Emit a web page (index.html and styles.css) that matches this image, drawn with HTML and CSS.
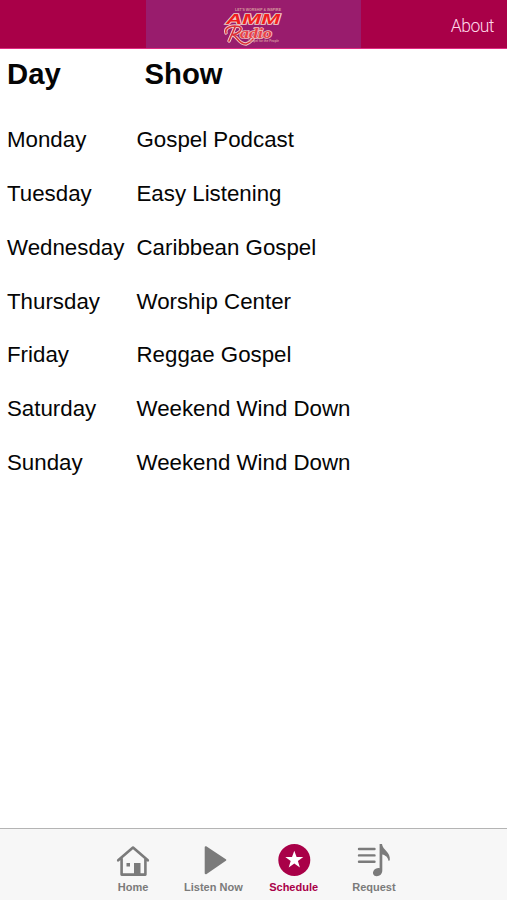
FILE: index.html
```html
<!DOCTYPE html>
<html lang="en">
<head>
<meta charset="utf-8">
<title>AMM Radio – Schedule</title>
<link rel="stylesheet" href="styles.css">
</head>
<body>
<header class="topbar">
  <div class="banner">
    <svg class="logo" width="66" height="48" viewBox="0 0 66 48" role="img" aria-label="AMM Radio">
      <text class="logo-small" x="14" y="11.3" textLength="46" lengthAdjust="spacingAndGlyphs">LET'S WORSHIP &amp; INSPIRE</text>
      <text class="logo-amm" x="5" y="23.8" textLength="54" lengthAdjust="spacingAndGlyphs">AMM</text>
      <text class="logo-script" x="19" y="37.5" textLength="32" lengthAdjust="spacingAndGlyphs">adio</text>
      <path class="logo-edge" d="M5 33C3 27 12 25 18 26.5C24 29 16 35 11 34.5C17 36 17 44 25 44C29 43 30 41 32 39M14 27L8 41"/>
      <path class="logo-r" d="M5 33C3 27 12 25 18 26.5C24 29 16 35 11 34.5C17 36 17 44 25 44C29 43 30 41 32 39M14 27L8 41"/>
      <text class="logo-small" x="27" y="41.8" textLength="31" lengthAdjust="spacingAndGlyphs">Gospel for the People</text>
    </svg>
  </div>
  <a class="about">About</a>
</header>
<main class="schedule">
  <div class="row head"><h1>Day</h1><h1>Show</h1></div>
  <div class="row"><span>Monday</span><span>Gospel Podcast</span></div>
  <div class="row"><span>Tuesday</span><span>Easy Listening</span></div>
  <div class="row"><span>Wednesday</span><span>Caribbean Gospel</span></div>
  <div class="row"><span>Thursday</span><span>Worship Center</span></div>
  <div class="row"><span>Friday</span><span>Reggae Gospel</span></div>
  <div class="row"><span>Saturday</span><span>Weekend Wind Down</span></div>
  <div class="row"><span>Sunday</span><span>Weekend Wind Down</span></div>
</main>
<nav class="tabs">
  <a class="tab">
    <svg width="36" height="36" viewBox="0 0 36 36"><path class="line" d="M3.2 18.3L18 5.6L32.8 18.3M6.6 16.5V32.6H30.4V16.5"/><path class="fill" d="M19 21h6.5v11H19zM11.5 21h3.5v3.5h-3.5z"/></svg>
    <span>Home</span>
  </a>
  <a class="tab">
    <svg width="36" height="36" viewBox="0 0 36 36"><path class="fill play" d="M10.7 5.2L30.3 18L10.7 31.3Z"/></svg>
    <span>Listen Now</span>
  </a>
  <a class="tab active">
    <svg width="36" height="36" viewBox="0 0 36 36"><circle class="fill" cx="18.3" cy="18" r="16"/><path class="star" d="M18.3 8.7L20.6 15H27.3L21.9 19L23.9 25.6L18.3 21.6L12.7 25.6L14.7 19L9.3 15H16Z"/></svg>
    <span>Schedule</span>
  </a>
  <a class="tab">
    <svg width="36" height="36" viewBox="0 0 36 36"><path class="bars" d="M3 7H18.5M3 13.4H18.5M3 19.8H18.5"/><path class="fill" d="M23.6 2H26C26.5 8 34.8 10 33.8 18.3L32.6 19C32 15 29.5 13.2 26.3 12.4V28.5C26.3 32 23.8 34.2 20.8 34.2C17.2 34.2 16.2 31.2 17.6 28.8C18.9 26.6 21.6 25.6 23.6 26.2Z"/></svg>
    <span>Request</span>
  </a>
</nav>
</body>
</html>
```

FILE: styles.css
```css
* { box-sizing: border-box; }
body {
  margin: 0;
  height: 900px;
  display: flex;
  flex-direction: column;
  background: #fff;
  color: #050505;
  font-family: "Liberation Sans", Arial, sans-serif;
  overflow: hidden;
}
.topbar {
  flex: none;
  height: 49px;
  display: grid;
  grid-template-columns: 146px 215px 1fr;
  align-items: center;
  background: #a90048;
  border-bottom: 1px solid #df2b82;
}
.banner {
  grid-column: 2;
  height: 48px;
  display: flex;
  justify-content: center;
  background: #991c6d;
}
.logo { display: block; }
.logo-small {
  font-size: 4px;
  font-weight: bold;
  fill: #d69b9f;
}
.logo-amm {
  font-size: 15.5px;
  font-weight: bold;
  font-style: italic;
  fill: #f01d20;
  stroke: #eed0c8;
  stroke-width: 1.6px;
  paint-order: stroke;
}
.logo-script {
  font-family: "Liberation Serif", serif;
  font-size: 15px;
  font-weight: bold;
  font-style: italic;
  fill: #e94046;
  stroke: #f0c5bd;
  stroke-width: 1.4px;
  paint-order: stroke;
}
.logo-edge, .logo-r { fill: none; stroke-linecap: round; }
.logo-edge { stroke: #efcfca; stroke-width: 3.4px; }
.logo-r { stroke: #dc3038; stroke-width: 1.6px; }
.about {
  grid-column: 3;
  justify-self: end;
  margin: 3px 13px 0 0;
  font-family: Roboto, sans-serif;
  font-size: 17.5px;
  font-weight: 300;
  letter-spacing: -0.5px;
  color: #ffd9ea;
}
.schedule { flex: 1; padding-left: 7px; }
.row {
  height: 53.8px;
  display: grid;
  grid-template-columns: 129.5px 1fr;
  align-items: center;
  font-size: 22.3px;
  white-space: nowrap;
}
.head { height: 64.4px; align-items: start; padding-top: 8px; grid-template-columns: 137.5px 1fr; }
h1 { margin: 0; font-size: 29.3px; line-height: 34px; }
.tabs {
  flex: none;
  height: 72px;
  display: flex;
  justify-content: center;
  padding-top: 13px;
  border-top: 1px solid #b4b4b4;
  background: #f7f7f7;
}
.tab {
  width: 80.3px;
  display: flex;
  flex-direction: column;
  align-items: center;
  color: #7b7b7b;
  font-size: 11px;
  font-weight: bold;
  line-height: 13px;
}
.tab span { margin-top: 3px; white-space: nowrap; }
.active { color: #a90048; }
.line { fill: none; stroke: currentColor; stroke-width: 2.6px; stroke-linejoin: round; stroke-linecap: round; }
.bars { fill: none; stroke: currentColor; stroke-width: 2.4px; stroke-linecap: round; }
.fill { fill: currentColor; }
.play { stroke: currentColor; stroke-width: 2px; stroke-linejoin: round; }
.star { fill: #fff; }
```
